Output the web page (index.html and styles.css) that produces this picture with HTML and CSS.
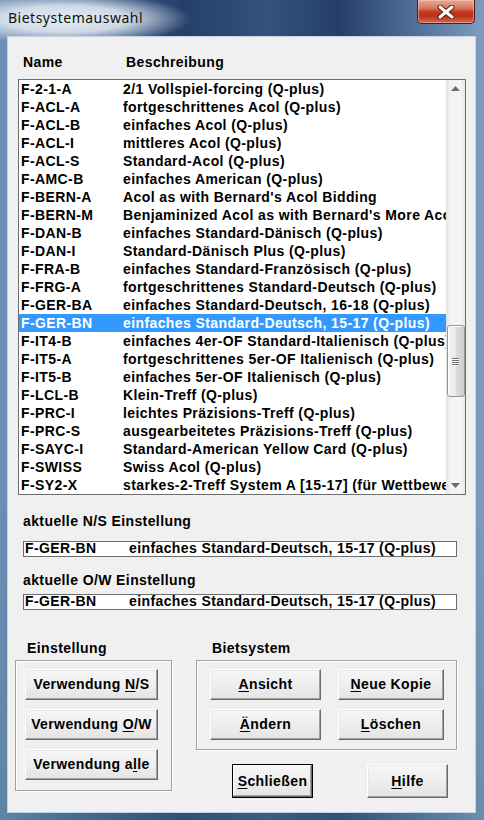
FILE: index.html
```html
<!DOCTYPE html>
<html lang="de">
<head>
<meta charset="utf-8">
<title>Bietsystemauswahl</title>
<link rel="stylesheet" href="styles.css">
</head>
<body>
<div class="window">
  <div class="titlebar">
    <span class="title">Bietsystemauswahl</span>
    <div class="close">
      <svg width="20" height="14" viewBox="0 0 20 14">
        <path d="M4 2 L16 12 M16 2 L4 12" stroke="#5a1a10" stroke-width="5" stroke-linecap="round" fill="none"/>
        <path d="M4 2 L16 12 M16 2 L4 12" stroke="#ffffff" stroke-width="3" stroke-linecap="round" fill="none"/>
      </svg>
    </div>
  </div>
  <div class="client">
    <div class="head"><span class="c-name">Name</span><span>Beschreibung</span></div>
    <div class="listbox">
      <div class="rows">
        <div class="row"><span class="c-name">F-2-1-A</span><span class="c-desc">2/1 Vollspiel-forcing (Q-plus)</span></div>
        <div class="row"><span class="c-name">F-ACL-A</span><span class="c-desc">fortgeschrittenes Acol (Q-plus)</span></div>
        <div class="row"><span class="c-name">F-ACL-B</span><span class="c-desc">einfaches Acol (Q-plus)</span></div>
        <div class="row"><span class="c-name">F-ACL-I</span><span class="c-desc">mittleres Acol (Q-plus)</span></div>
        <div class="row"><span class="c-name">F-ACL-S</span><span class="c-desc">Standard-Acol (Q-plus)</span></div>
        <div class="row"><span class="c-name">F-AMC-B</span><span class="c-desc">einfaches American (Q-plus)</span></div>
        <div class="row"><span class="c-name">F-BERN-A</span><span class="c-desc">Acol as with Bernard's Acol Bidding</span></div>
        <div class="row"><span class="c-name">F-BERN-M</span><span class="c-desc">Benjaminized Acol as with Bernard's More Acol Bidding</span></div>
        <div class="row"><span class="c-name">F-DAN-B</span><span class="c-desc">einfaches Standard-Dänisch (Q-plus)</span></div>
        <div class="row"><span class="c-name">F-DAN-I</span><span class="c-desc">Standard-Dänisch Plus (Q-plus)</span></div>
        <div class="row"><span class="c-name">F-FRA-B</span><span class="c-desc">einfaches Standard-Französisch (Q-plus)</span></div>
        <div class="row"><span class="c-name">F-FRG-A</span><span class="c-desc">fortgeschrittenes Standard-Deutsch (Q-plus)</span></div>
        <div class="row"><span class="c-name">F-GER-BA</span><span class="c-desc">einfaches Standard-Deutsch, 16-18 (Q-plus)</span></div>
        <div class="row selected"><span class="c-name">F-GER-BN</span><span class="c-desc">einfaches Standard-Deutsch, 15-17 (Q-plus)</span></div>
        <div class="row"><span class="c-name">F-IT4-B</span><span class="c-desc">einfaches 4er-OF Standard-Italienisch (Q-plus)</span></div>
        <div class="row"><span class="c-name">F-IT5-A</span><span class="c-desc">fortgeschrittenes 5er-OF Italienisch (Q-plus)</span></div>
        <div class="row"><span class="c-name">F-IT5-B</span><span class="c-desc">einfaches 5er-OF Italienisch (Q-plus)</span></div>
        <div class="row"><span class="c-name">F-LCL-B</span><span class="c-desc">Klein-Treff (Q-plus)</span></div>
        <div class="row"><span class="c-name">F-PRC-I</span><span class="c-desc">leichtes Präzisions-Treff (Q-plus)</span></div>
        <div class="row"><span class="c-name">F-PRC-S</span><span class="c-desc">ausgearbeitetes Präzisions-Treff (Q-plus)</span></div>
        <div class="row"><span class="c-name">F-SAYC-I</span><span class="c-desc">Standard-American Yellow Card (Q-plus)</span></div>
        <div class="row"><span class="c-name">F-SWISS</span><span class="c-desc">Swiss Acol (Q-plus)</span></div>
        <div class="row"><span class="c-name">F-SY2-X</span><span class="c-desc">starkes-2-Treff System A [15-17] (für Wettbewerbe)</span></div>
      </div>
      <div class="scrollbar">
        <div class="sb-arrow"><svg width="9" height="5" viewBox="0 0 9 5"><path d="M0 5 L4.5 0 L9 5 Z" fill="#6d6d6d"/></svg></div>
        <div class="sb-track">
          <div class="sb-thumb">
            <div class="grip"></div><div class="grip"></div><div class="grip"></div><div class="grip"></div>
          </div>
        </div>
        <div class="sb-arrow"><svg width="9" height="5" viewBox="0 0 9 5"><path d="M0 0 L9 0 L4.5 5 Z" fill="#6d6d6d"/></svg></div>
      </div>
    </div>

    <div class="label label-ns">aktuelle N/S Einstellung</div>
    <div class="field field-ns"><span class="f-name">F-GER-BN</span><span>einfaches Standard-Deutsch, 15-17 (Q-plus)</span></div>
    <div class="label label-ow">aktuelle O/W Einstellung</div>
    <div class="field field-ow"><span class="f-name">F-GER-BN</span><span>einfaches Standard-Deutsch, 15-17 (Q-plus)</span></div>

    <div class="bottom">
      <div class="col-left">
        <div class="glabel gl-left">Einstellung</div>
        <div class="group group-left">
          <button class="btn btn-wide">Verwendung <u>N</u>/S</button>
          <button class="btn btn-wide">Verwendung <u>O</u>/W</button>
          <button class="btn btn-wide">Verwendung a<u>l</u>le</button>
        </div>
      </div>
      <div class="col-right">
        <div class="glabel gl-right">Bietsystem</div>
        <div class="group group-right">
          <button class="btn btn-a"><u>A</u>nsicht</button>
          <button class="btn btn-b"><u>N</u>eue Kopie</button>
          <button class="btn btn-a"><u>Ä</u>ndern</button>
          <button class="btn btn-b"><u>L</u>öschen</button>
        </div>
        <div class="actions">
          <button class="btn btn-act default"><u>S</u>chließen</button>
          <button class="btn btn-act"><u>H</u>ilfe</button>
        </div>
      </div>
    </div>
  </div>
</div>
</body>
</html>
```
FILE: styles.css
```css
* { box-sizing: border-box; }
html, body { margin: 0; padding: 0; }
body {
  width: 484px;
  height: 820px;
  overflow: hidden;
  font-family: "Liberation Sans", Arial, sans-serif;
}
.window {
  width: 484px;
  height: 820px;
  display: flex;
  flex-direction: column;
  background:
    radial-gradient(ellipse 125px 26px at 66px 19px, rgba(232,238,245,0.98) 0%, rgba(222,230,240,0.9) 50%, rgba(210,222,235,0) 100%),
    linear-gradient(180deg, rgba(0,0,0,0) 0%, rgba(0,0,0,0) 60%, rgba(60,120,140,0.35) 100%),
    linear-gradient(90deg, #6f8fb4 0%, #4d6e98 12%, #243f6a 38%, #33527e 55%, #253f69 70%, #5777a0 88%, #7f9dc0 100%);
}
.titlebar {
  height: 36px;
  flex: none;
  display: flex;
  justify-content: space-between;
  align-items: flex-start;
}
.title {
  font-family: "Noto Sans", "Open Sans", sans-serif;
  font-size: 14px;
  letter-spacing: 0.5px;
  color: #111;
  margin: 9px 0 0 8px;
  line-height: 18px;
}
.close {
  width: 58px;
  height: 24px;
  margin: 0 9px 0 0;
  border: 1px solid #4a1d16;
  border-top: none;
  border-radius: 0 0 5px 5px;
  background: linear-gradient(180deg, #e9a996 0%, #d77a62 35%, #c2381b 52%, #b6341c 70%, #d86a4a 100%);
  box-shadow: inset 0 0 0 1px rgba(255,210,200,0.45);
  display: flex;
  align-items: center;
  justify-content: center;
}
.client {
  flex: none;
  height: 777px;
  margin: 0 8px 7px 7px;
  background: #f0f0f0;
  border: 1px solid #c5d2df;
  display: flex;
  flex-direction: column;
  font-weight: bold;
  font-size: 14px;
  letter-spacing: 0.4px;
  color: #000;
}
.head {
  display: flex;
  padding: 16px 0 0 15px;
  line-height: 18px;
  height: 34px;
}
.head .c-name { width: 103px; }
.listbox {
  margin: 8px 0 0 10px;
  width: 448px;
  height: 416px;
  border: 1px solid #6e6e6e;
  background: #fff;
  display: flex;
}
.rows {
  flex: 1;
  overflow: hidden;
  min-width: 0;
}
.row {
  height: 18px;
  line-height: 18px;
  display: flex;
  white-space: nowrap;
  padding-left: 2px;
}
.row .c-name { width: 102px; flex: none; }
.row .c-desc { flex: none; }
.row.selected { background: #3399ff; color: #fff; }
.scrollbar {
  width: 19px;
  flex: none;
  display: flex;
  flex-direction: column;
  background: linear-gradient(90deg, #e3e3e3 0%, #f3f3f3 25%, #f5f5f5 75%, #e8e8e8 100%);
}
.sb-arrow {
  height: 17px;
  display: flex;
  align-items: center;
  justify-content: center;
}
.sb-track {
  flex: 1;
  display: flex;
  flex-direction: column;
  align-items: center;
}
.sb-thumb {
  margin-top: 228px;
  width: 18px;
  height: 72px;
  border: 1px solid #979797;
  border-radius: 3px;
  background: linear-gradient(90deg, #f2f2f2 0%, #ebebeb 45%, #dadada 55%, #d0d0d0 100%);
  box-shadow: inset 1px 1px 0 #fff;
  display: flex;
  flex-direction: column;
  align-items: center;
  justify-content: center;
  gap: 1px;
}
.grip {
  width: 7px;
  height: 1px;
  background: #6f6f6f;
  box-shadow: 0 1px 0 #fff;
}
.label {
  line-height: 18px;
  height: 18px;
  padding-left: 15px;
}
.label-ns { margin-top: 17px; }
.label-ow { margin-top: 14px; }
.field {
  margin-left: 15px;
  width: 434px;
  height: 16px;
  border: 1px solid #6e6e6e;
  background: #fff;
  line-height: 13px;
  padding-left: 1px;
  display: flex;
  white-space: nowrap;
}
.field-ns { margin-top: 11px; }
.field-ow { margin-top: 5px; }
.f-name { width: 104px; flex: none; }
.bottom {
  display: grid;
  grid-template-columns: 157px 261px;
  column-gap: 24px;
  margin: 29px 0 0 7px;
  align-items: start;
}
.glabel {
  line-height: 18px;
  height: 18px;
  margin-bottom: 3px;
}
.gl-left { padding-left: 12px; }
.gl-right { padding-left: 16px; }
.group {
  border: 1px solid #a0a0a0;
  box-shadow: 1px 1px 0 #fff, inset 1px 1px 0 #fff;
}
.group-left {
  height: 131px;
  padding: 8px 0 0 9px;
  display: flex;
  flex-direction: column;
  gap: 9px;
}
.group-right {
  height: 90px;
  padding: 8px 0 0 13px;
  display: grid;
  grid-template-columns: 111px 106px;
  column-gap: 17px;
  row-gap: 9px;
  align-content: start;
}
.btn {
  height: 31px;
  padding: 0;
  margin: 0;
  font: inherit;
  letter-spacing: inherit;
  color: #000;
  background: linear-gradient(180deg, #f6f6f6 0%, #eeeeee 50%, #e4e4e4 100%);
  border: 1px solid;
  border-color: #ffffff #6b6b6b #6b6b6b #ffffff;
  box-shadow: inset -1px -1px 0 #a0a0a0, inset 1px 1px 0 #e8e8e8;
  text-align: center;
  line-height: 27px;
}
.btn u { text-decoration-thickness: 1px; text-underline-offset: 2px; }
.btn-wide { width: 133px; }
.btn-a { width: 111px; }
.btn-b { width: 106px; }
.actions {
  display: flex;
  margin: 14px 0 0 36px;
  gap: 54px;
}
.btn-act {
  width: 81px;
  height: 34px;
}
.btn.default {
  border: 1px solid #000;
  box-shadow: inset -1px -1px 0 #6b6b6b, inset 1px 1px 0 #fff, inset -2px -2px 0 #a0a0a0;
}
```
